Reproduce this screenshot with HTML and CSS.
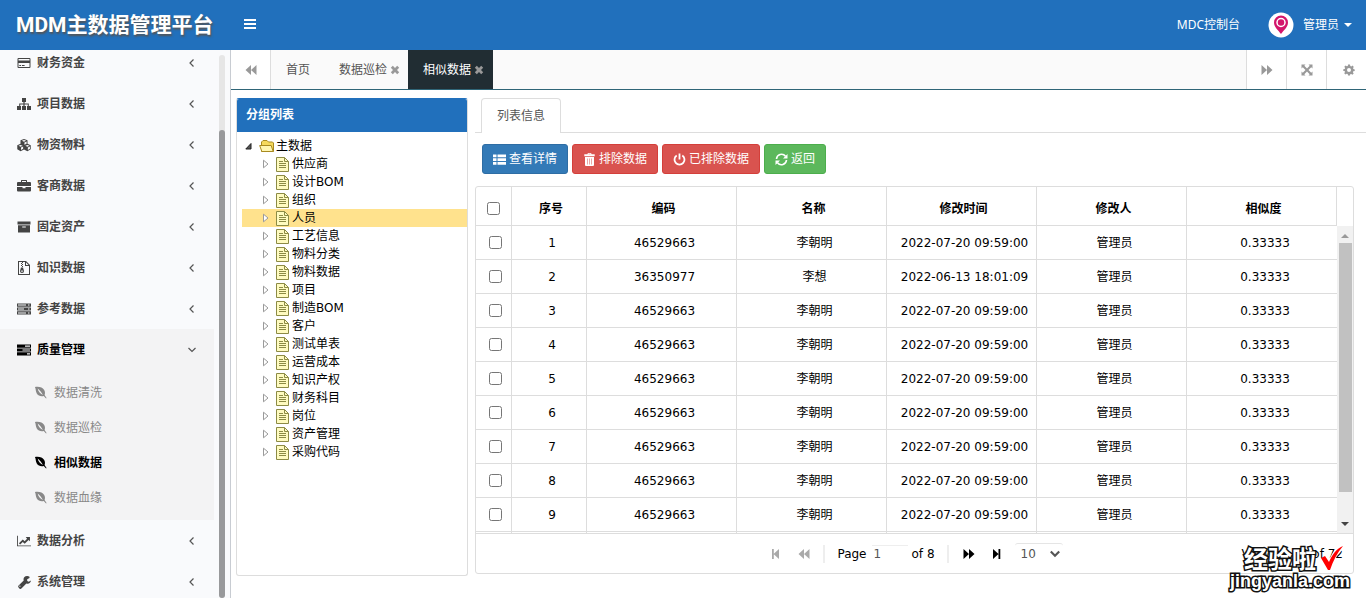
FILE: index.html
```html
<!DOCTYPE html>
<html lang="zh-CN">
<head>
<meta charset="utf-8">
<title>MDM主数据管理平台</title>
<link rel="stylesheet" href="styles.css">
</head>
<body>
<svg class="defs" aria-hidden="true">
  <symbol id="card" viewBox="0 0 14 14"><path fill-rule="evenodd" d="M1.5 2h11q1 0 1 1v8q0 1-1 1h-11q-1 0-1-1V3q0-1 1-1zM1.5 3v1.400h11V3zM1.500 7v4h11V7zM2.300 9h1.800v1H2.300zM5 9h2.600v1H5z"/></symbol>
  <symbol id="sitemap" viewBox="0 0 14 14"><path d="M5 1h4v4H7.600v1.500h4.200V9H14v4h-4V9h.8V7.500H7.600V9H9v4H5V9h1.400V7.500H3.200V9H4v4H0V9h2.200V6.500h4.200V5H5z"/></symbol>
  <symbol id="cubes" viewBox="0 0 16 14"><path fill-rule="evenodd" d="M8 0l4 1.600v4.100l3.700 1.600v4.500L11.900 14 8 12.100 4.100 14 .3 11.800V7.300L4 5.700V1.600zM5.500 2.200L8 3.200l2.500-1L8 1.200zM8.500 4.200v2.400l2.500-1V3.100zM1.700 7.900l2.400 1 2.400-1-2.400-1zM4.600 9.900v2.700l2.400-1.200V8.800zM9.500 7.900l2.400 1 2.400-1-2.400-1zM12.400 9.900v2.700l2.400-1.200V8.800z"/></symbol>
  <symbol id="case" viewBox="0 0 14 14"><path fill-rule="evenodd" d="M4 3V1.600q0-.6.600-.6h4.800q.6 0 .6.600V3h3q1 0 1 1v3H0V4q0-1 1-1zM5 2v1h4V2zM0 8h5.500v1.200h3V8H14v3.500q0 1-1 1H1q-1 0-1-1z"/></symbol>
  <symbol id="archive" viewBox="0 0 14 14"><path fill-rule="evenodd" d="M.5 1.500h13v3H.5zM1 5.300h12v7.200H1zM5.200 6.400v1.200h3.600V6.400z"/></symbol>
  <symbol id="zip" viewBox="0 0 14 14"><path fill-rule="evenodd" d="M1 0h8l4 4v10H1zM2 1v12h10V5H8V1h-2v1H5V1zM9 1.500V4h2.500zM4 2h1v1H4zM5 3h1v1H5zM4 4h1v1H4zM5 5h1v1H5zM4 6.500h2l1 3.500q.2 2-2 2t-2-2zM4.200 9.500v1.300h1.600V9.500z"/></symbol>
  <symbol id="server" viewBox="0 0 14 14"><path fill-rule="evenodd" d="M0 1.500h14v3.200H0zM1 2.500v1h8v-1zM11 2.500v1h1.500v-1zM0 5.400h14v3.200H0zM1 6.500v1h6v-1zM11 6.500v1h1.500v-1zM0 9.300h14v3.200H0zM1 10.400v1h8v-1zM11 10.400v1h1.500v-1z"/></symbol>
  <symbol id="tasks" viewBox="0 0 14 14"><path fill-rule="evenodd" d="M0 1.500h14v3.200H0zM8 2.500v1.200h5V2.500zM0 5.400h14v3.200H0zM5.500 6.400v1.200H13V6.400zM0 9.300h14v3.200H0zM10 10.300v1.200h3v-1.200z"/></symbol>
  <symbol id="leaf" viewBox="0 0 14 14"><path fill-rule="evenodd" d="M1 1c5-.5 8 .3 10 3.200 1.200 2 .9 4.100.4 5.600L13.500 13l-.5.400-2.500-2.700C7.500 11.500 4.500 10.500 3 8 1.600 5.700 2.200 3 1 1zM4 2.700c.4 2.800 2.500 5.600 5.600 7.100C8.200 7.200 6.400 4.800 4 2.700z"/></symbol>
  <symbol id="chart" viewBox="0 0 16 14"><path d="M0 1h1v11h15v1H0zM10 2.500h4.800v4.800l-1.600-1.500-4.400 4.400-2.200-2.200-3 3-1.400-1.400 4.400-4.400 2.200 2.200 2.700-2.900z"/></symbol>
  <symbol id="wrench" viewBox="0 0 14 14"><path fill-rule="evenodd" d="M12.500 2.900l-2.300 1.400v1.600l1.500.8 2.200-1.300c.1 2.300-2.100 4-4.500 3.200l-5 5q-1 .7-2-.2l-.8-.9q-.9-1 0-1.900l5.100-5C6 3 7.500.8 10.200.9q1.300.1 2.300.9zM2.300 11.200a.6.600 0 1 0 1.200 0 .6.600 0 1 0-1.200 0z"/></symbol>
  <symbol id="left" viewBox="0 0 10 10"><path class="line" d="M6.500 1.500L3 5l3.500 3.500"/></symbol>
  <symbol id="down" viewBox="0 0 10 10"><path class="line" d="M1.500 3L5 6.500 8.500 3"/></symbol>
  <symbol id="pick" viewBox="0 0 10 10"><path class="thick" d="M1.500 3L5 6.500 8.500 3"/></symbol>
  <symbol id="rewind" viewBox="0 0 12 12"><path d="M6 1v10L.5 6zM11.500 1v10L6 6z"/></symbol>
  <symbol id="forward" viewBox="0 0 12 12"><path d="M.5 1v10L6 6zM6 1v10l5.500-5z"/></symbol>
  <symbol id="first" viewBox="0 0 12 12"><path d="M2 1h1.800v10H2zM9 1v10L3.500 6z"/></symbol>
  <symbol id="last" viewBox="0 0 12 12"><path d="M2 1v10l5.500-5zM7.500 1h1.800v10H7.500z"/></symbol>
  <symbol id="expand" viewBox="0 0 12 12"><path d="M.5.500h4L3.300 1.800 6 4.500l2.700-2.700L7.500.5h4v4l-1.300-1.200L7.500 6l2.700 2.700 1.300-1.200v4h-4l1.200-1.300L6 7.500l-2.700 2.700 1.200 1.300h-4v-4l1.300 1.200L4.500 6 1.800 3.300.5 4.500z"/></symbol>
  <symbol id="cog" viewBox="0 0 12 12"><path fill-rule="evenodd" d="M5 .5h2l.3 1.500 1 .4 1.300-.8 1.200 1.300-.8 1.200.4 1 1.300.3v1.500l-1.400.4-.4 1 .8 1.200-1.300 1.200-1.200-.8-1 .4L7 11.500H5l-.3-1.400-1-.4-1.200.8-1.300-1.200.8-1.300-.4-1L.3 7V5.200l1.400-.3.4-1-.8-1.200 1.300-1.200 1.200.8 1-.4zM6 4a2 2 0 1 0 0 4 2 2 0 1 0 0-4z"/></symbol>
  <symbol id="close" viewBox="0 0 10 10"><path d="M2.800.8L5 3 7.200.8l2 2L7 5l2.200 2.200-2 2L5 7 2.800 9.200l-2-2L3 5 .8 2.800z"/></symbol>
  <symbol id="list" viewBox="0 0 13 12"><path d="M0 1h3.500v2.800H0zM4.500 1H13v2.800H4.500zM0 4.700h3.500v2.800H0zM4.500 4.700H13v2.800H4.500zM0 8.400h3.500v2.800H0zM4.500 8.400H13v2.800H4.500z"/></symbol>
  <symbol id="trash" viewBox="0 0 12 13"><path fill-rule="evenodd" d="M4 1.200Q4 0 5 0h2q1 0 1 1.200h3.200v2H.8v-2zM5 .7v.5h2V.7zM1.500 4h9v8q0 1-1 1h-7q-1 0-1-1zM3.600 5.500v6h.5v-6zM5.700 5.500v6h.5v-6zM7.900 5.500v6h.5v-6z"/></symbol>
  <symbol id="power" viewBox="0 0 13 13"><path class="thick" d="M3.700 2.500a5 5 0 1 0 5.600 0M6.500.5v6"/></symbol>
  <symbol id="refresh" viewBox="0 0 13 13"><path class="mid" d="M1.500 6A5 5 0 0 1 10.500 3.300M11.500 7A5 5 0 0 1 2.500 9.700"/><path d="M12.500 1v4.500H8zM.5 12V7.500H5z"/></symbol>
  <symbol id="closed" viewBox="0 0 10 10"><path fill="#fff" stroke="#9a9a9a" d="M2.500 1.200v7.600L7 5z"/></symbol>
  <symbol id="open" viewBox="0 0 10 10"><path fill="#555" stroke="#222" d="M7 2.500V8H1.800z"/></symbol>
  <symbol id="folder" viewBox="0 0 16 16"><path fill="#f5d95c" stroke="#a88a20" d="M2.500 13.500V4l1.500-1.500h4L9.500 4h4l1 1v8.500z"/><path fill="#fff6b0" stroke="#a88a20" d="M.7 7.500h11.500l2 6H2.800z"/></symbol>
  <symbol id="doc" viewBox="0 0 13 15"><path fill="#fffbc0" stroke="#8c8b45" d="M.5 .5h8l4 4v10h-12z"/><path fill="none" stroke="#8c8b45" d="M8.500 .5v4h4M3 4.500h4M3 6.500h7M3 8.500h7M3 10.500h7"/></symbol>
</svg>

<header class="top">
  <h1 class="brand">MDM主数据管理平台</h1>
  <button class="burger" aria-label="菜单"><i></i><i></i><i></i></button>
  <a class="console" href="#">MDC控制台</a>
  <button class="user">
    <svg class="avatar" viewBox="0 0 26 26"><circle cx="13" cy="13" r="12.500" fill="#fff"/><path fill="#d3156b" d="M13 22c-2.500-3.500-7-7-7-11.500a7 7 0 0 1 14 0C20 15 15.500 18.500 13 22z"/><circle cx="13" cy="10.500" r="4" fill="#d3156b" stroke="#fff" stroke-width="1.500"/></svg>
    管理员<span class="caret"></span>
  </button>
</header>

<div class="shell">
  <aside class="side">
    <nav class="menu">
      <a class="item" href="#"><svg><use href="#card"/></svg><span>财务资金</span><svg class="arrow"><use href="#left"/></svg></a>
      <a class="item" href="#"><svg><use href="#sitemap"/></svg><span>项目数据</span><svg class="arrow"><use href="#left"/></svg></a>
      <a class="item" href="#"><svg><use href="#cubes"/></svg><span>物资物料</span><svg class="arrow"><use href="#left"/></svg></a>
      <a class="item" href="#"><svg><use href="#case"/></svg><span>客商数据</span><svg class="arrow"><use href="#left"/></svg></a>
      <a class="item" href="#"><svg><use href="#archive"/></svg><span>固定资产</span><svg class="arrow"><use href="#left"/></svg></a>
      <a class="item" href="#"><svg><use href="#zip"/></svg><span>知识数据</span><svg class="arrow"><use href="#left"/></svg></a>
      <a class="item" href="#"><svg><use href="#server"/></svg><span>参考数据</span><svg class="arrow"><use href="#left"/></svg></a>
      <div class="group">
        <a class="item on" href="#"><svg><use href="#tasks"/></svg><span>质量管理</span><svg class="arrow"><use href="#down"/></svg></a>
        <div class="subs">
          <a class="sub" href="#"><svg><use href="#leaf"/></svg>数据清洗</a>
          <a class="sub" href="#"><svg><use href="#leaf"/></svg>数据巡检</a>
          <a class="sub on" href="#"><svg><use href="#leaf"/></svg>相似数据</a>
          <a class="sub" href="#"><svg><use href="#leaf"/></svg>数据血缘</a>
        </div>
      </div>
      <a class="item" href="#"><svg><use href="#chart"/></svg><span>数据分析</span><svg class="arrow"><use href="#left"/></svg></a>
      <a class="item" href="#"><svg><use href="#wrench"/></svg><span>系统管理</span><svg class="arrow"><use href="#left"/></svg></a>
    </nav>
    <div class="rail"><div class="thumb"></div></div>
  </aside>

  <main class="main">
    <div class="tabs">
      <button class="tool first" aria-label="向左"><svg><use href="#rewind"/></svg></button>
      <a class="tab" href="#">首页</a>
      <a class="tab" href="#">数据巡检<svg><use href="#close"/></svg></a>
      <a class="tab current" href="#">相似数据<svg><use href="#close"/></svg></a>
      <span class="fill"></span>
      <button class="tool" aria-label="向右"><svg><use href="#forward"/></svg></button>
      <button class="tool" aria-label="全屏"><svg><use href="#expand"/></svg></button>
      <button class="tool cog" aria-label="设置"><svg><use href="#cog"/></svg></button>
    </div>

    <div class="content">
      <section class="tree">
        <h2 class="tree-title">分组列表</h2>
        <ul class="nodes">
          <li class="node root"><svg class="tw"><use href="#open"/></svg><svg class="fold"><use href="#folder"/></svg>主数据</li>
          <li class="node"><svg class="tw"><use href="#closed"/></svg><svg class="doc"><use href="#doc"/></svg>供应商</li>
          <li class="node"><svg class="tw"><use href="#closed"/></svg><svg class="doc"><use href="#doc"/></svg>设计BOM</li>
          <li class="node"><svg class="tw"><use href="#closed"/></svg><svg class="doc"><use href="#doc"/></svg>组织</li>
          <li class="node picked"><svg class="tw"><use href="#closed"/></svg><svg class="doc"><use href="#doc"/></svg>人员</li>
          <li class="node"><svg class="tw"><use href="#closed"/></svg><svg class="doc"><use href="#doc"/></svg>工艺信息</li>
          <li class="node"><svg class="tw"><use href="#closed"/></svg><svg class="doc"><use href="#doc"/></svg>物料分类</li>
          <li class="node"><svg class="tw"><use href="#closed"/></svg><svg class="doc"><use href="#doc"/></svg>物料数据</li>
          <li class="node"><svg class="tw"><use href="#closed"/></svg><svg class="doc"><use href="#doc"/></svg>项目</li>
          <li class="node"><svg class="tw"><use href="#closed"/></svg><svg class="doc"><use href="#doc"/></svg>制造BOM</li>
          <li class="node"><svg class="tw"><use href="#closed"/></svg><svg class="doc"><use href="#doc"/></svg>客户</li>
          <li class="node"><svg class="tw"><use href="#closed"/></svg><svg class="doc"><use href="#doc"/></svg>测试单表</li>
          <li class="node"><svg class="tw"><use href="#closed"/></svg><svg class="doc"><use href="#doc"/></svg>运营成本</li>
          <li class="node"><svg class="tw"><use href="#closed"/></svg><svg class="doc"><use href="#doc"/></svg>知识产权</li>
          <li class="node"><svg class="tw"><use href="#closed"/></svg><svg class="doc"><use href="#doc"/></svg>财务科目</li>
          <li class="node"><svg class="tw"><use href="#closed"/></svg><svg class="doc"><use href="#doc"/></svg>岗位</li>
          <li class="node"><svg class="tw"><use href="#closed"/></svg><svg class="doc"><use href="#doc"/></svg>资产管理</li>
          <li class="node"><svg class="tw"><use href="#closed"/></svg><svg class="doc"><use href="#doc"/></svg>采购代码</li>
        </ul>
      </section>

      <section class="work">
        <div class="pills"><a class="pill" href="#">列表信息</a></div>
        <div class="actions">
          <button class="btn blue"><svg><use href="#list"/></svg>查看详情</button>
          <button class="btn red"><svg><use href="#trash"/></svg>排除数据</button>
          <button class="btn red"><svg><use href="#power"/></svg>已排除数据</button>
          <button class="btn green"><svg><use href="#refresh"/></svg>返回</button>
        </div>
        <div class="grid">
          <div class="head">
            <table class="data">
              <colgroup><col class="c-check"><col class="c-num"><col><col><col><col><col></colgroup>
              <thead><tr><th><input type="checkbox" aria-label="全选"></th><th>序号</th><th>编码</th><th>名称</th><th>修改时间</th><th>修改人</th><th>相似度</th></tr></thead>
            </table>
          </div>
          <div class="rows">
            <table class="data">
              <colgroup><col class="c-check"><col class="c-num"><col><col><col><col><col></colgroup>
              <tbody>
                <tr><td><input type="checkbox" aria-label="选择1"></td><td>1</td><td>46529663</td><td>李朝明</td><td>2022-07-20 09:59:00</td><td>管理员</td><td>0.33333</td></tr>
                <tr><td><input type="checkbox" aria-label="选择2"></td><td>2</td><td>36350977</td><td>李想</td><td>2022-06-13 18:01:09</td><td>管理员</td><td>0.33333</td></tr>
                <tr><td><input type="checkbox" aria-label="选择3"></td><td>3</td><td>46529663</td><td>李朝明</td><td>2022-07-20 09:59:00</td><td>管理员</td><td>0.33333</td></tr>
                <tr><td><input type="checkbox" aria-label="选择4"></td><td>4</td><td>46529663</td><td>李朝明</td><td>2022-07-20 09:59:00</td><td>管理员</td><td>0.33333</td></tr>
                <tr><td><input type="checkbox" aria-label="选择5"></td><td>5</td><td>46529663</td><td>李朝明</td><td>2022-07-20 09:59:00</td><td>管理员</td><td>0.33333</td></tr>
                <tr><td><input type="checkbox" aria-label="选择6"></td><td>6</td><td>46529663</td><td>李朝明</td><td>2022-07-20 09:59:00</td><td>管理员</td><td>0.33333</td></tr>
                <tr><td><input type="checkbox" aria-label="选择7"></td><td>7</td><td>46529663</td><td>李朝明</td><td>2022-07-20 09:59:00</td><td>管理员</td><td>0.33333</td></tr>
                <tr><td><input type="checkbox" aria-label="选择8"></td><td>8</td><td>46529663</td><td>李朝明</td><td>2022-07-20 09:59:00</td><td>管理员</td><td>0.33333</td></tr>
                <tr><td><input type="checkbox" aria-label="选择9"></td><td>9</td><td>46529663</td><td>李朝明</td><td>2022-07-20 09:59:00</td><td>管理员</td><td>0.33333</td></tr>
                <tr><td></td><td></td><td></td><td></td><td></td><td></td><td></td></tr>
              </tbody>
            </table>
            <div class="scroll"><span class="up"></span><span class="bar"></span><span class="dn"></span></div>
          </div>
          <div class="pager">
            <span></span>
            <div class="pages">
              <button class="pg dim" aria-label="首页"><svg><use href="#first"/></svg></button>
              <button class="pg dim" aria-label="上一页"><svg><use href="#rewind"/></svg></button>
              <i class="sep"></i>
              <label class="page">Page<input class="page-no" type="text" value="1"></label>
              <span>of 8</span>
              <i class="sep wide"></i>
              <button class="pg" aria-label="下一页"><svg><use href="#forward"/></svg></button>
              <button class="pg" aria-label="末页"><svg><use href="#last"/></svg></button>
              <div class="size"><select aria-label="每页条数"><option>10</option></select><svg><use href="#pick"/></svg></div>
            </div>
            <span class="view">View 1 - 10 of 72</span>
          </div>
        </div>
      </section>
    </div>
  </main>
</div>

<div class="mark">
  <div class="mark-cn">经验啦<svg viewBox="0 0 24 26"><path fill="none" stroke="#fff" stroke-width="5" d="M3 14l6 8C12 13 16 6 21 3"/><path fill="#f00" d="M1 13l4-2 4 6C12 10 16 4 23 1 17 8 13 16 10 25H8z"/></svg></div>
  <div class="mark-en">jingyanla.com</div>
</div>
</body>
</html>
```

FILE: styles.css
```css
* { box-sizing: border-box; }
body {
  margin: 0; height: 100vh; overflow: hidden; display: flex; flex-direction: column;
  font: 12px/18px "DejaVu Sans", "Noto Sans CJK SC", sans-serif; color: #222; background: #fff;
}
button { border: 0; background: none; padding: 0; font: inherit; color: inherit; }
a { color: inherit; text-decoration: none; }
svg { fill: currentColor; flex: none; }
.defs { position: absolute; width: 0; height: 0; }
.line { fill: none; stroke: currentColor; stroke-width: 1.2; }
.thick { fill: none; stroke: currentColor; stroke-width: 1.8; }
.mid { fill: none; stroke: currentColor; stroke-width: 1.6; }

.top { height: 50px; flex: none; display: flex; align-items: center; background: #2170bc; color: #fff; padding: 0 14px 0 16px; font-family: "Noto Sans", "Noto Sans CJK SC", sans-serif; }
.brand { margin: 0; width: 228px; font: bold 21px/50px Roboto, "Noto Sans CJK SC", sans-serif; text-shadow: 1px 2px 2px #555; white-space: nowrap; }
.burger { display: grid; gap: 2px; width: 12px; padding-bottom: 2px; }
.burger i { height: 2px; background: #fff; }
.console { margin-left: auto; }
.user { display: flex; align-items: center; margin-left: 28px; }
.avatar { width: 26px; height: 26px; margin-right: 9px; }
.caret { border: 4px solid transparent; border-top-color: #fff; border-bottom: 0; margin-left: 5px; }

.shell { flex: 1; min-height: 0; display: flex; }
.side { width: 231px; flex: none; display: flex; background: #f9fafc; border-right: 1px solid #c8ccd2; overflow: hidden; }
.menu { width: 214px; margin-top: -8px; }
.item { height: 41px; display: flex; align-items: center; padding: 0 16px 0 17px; color: #444; font-weight: 700; }
.item svg { width: 14px; height: 14px; margin-right: 6px; }
.item svg.arrow { width: 10px; height: 10px; margin: 0 1px 0 auto; color: #555; }
.item.on, .sub.on { color: #000; font-weight: 700; }
.group { background: #f3f3f4; }
.subs { padding: 5px 0; }
.sub { height: 35px; display: flex; align-items: center; padding-left: 34px; color: #888; }
.sub svg { width: 13px; height: 13px; margin-right: 7px; }
.rail { width: 6px; margin: 5px 0 0 5px; background: #e6e6e6; border-radius: 3px; padding-top: 75px; display: flex; }
.thumb { flex: 1; background: #98999b; border-radius: 3px; }

.main { flex: 1; min-width: 0; display: flex; flex-direction: column; }
.tabs { height: 40px; flex: none; display: flex; background: #fafafa; border-bottom: 1px solid #2f6577; color: #555; }
.tool { width: 40px; display: grid; place-items: center; background: #fff; border-left: 1px solid #ddd; color: #999; }
.tool.first { border-left: 0; border-right: 1px solid #ddd; }
.tool.cog { padding-left: 4px; }
.tool svg { width: 12px; height: 12px; }
.tab { display: flex; align-items: center; padding: 0 15px; }
.tab + .tab { padding: 0 8px 0 14px; }
.tab svg { width: 10px; height: 10px; margin-left: 3px; color: #999; }
.tab.current { background: #212d33; color: #fff; padding-left: 15px; padding-right: 9px; }
.fill { flex: 1; }

.content { flex: 1; min-height: 0; display: flex; gap: 7px; padding-left: 5px; }
.tree { width: 232px; flex: none; margin: 8px 0 22px; border: 1px solid #ddd; border-top-color: #2170bc; border-radius: 3px; overflow: hidden; }
.tree-title { margin: -1px 0 0; padding: 0 9px; font-size: 12px; line-height: 34px; background: #2170bc; color: #fff; }
.nodes { list-style: none; margin: 0; padding: 5px 0 0 5px; color: #000; }
.node { display: flex; align-items: center; height: 18px; padding-left: 19px; }
.node.root { padding-left: 2px; }
.tw { width: 10px; height: 10px; margin-right: 5px; }
.node .doc { width: 13px; height: 15px; margin-right: 3px; }
.node .fold { width: 16px; height: 16px; margin-right: 1px; }
.picked { background: #ffe28d; }

.work { flex: 1; min-width: 0; display: flex; flex-direction: column; padding-top: 8px; }
.pills { height: 35px; flex: none; display: flex; padding-left: 6px; border-bottom: 1px solid #ddd; }
.pill { height: 35px; width: 80px; text-align: center; line-height: 34px; color: #555; background: #fff; border: 1px solid #ddd; border-bottom: 0; border-radius: 4px 4px 0 0; }
.actions { display: flex; gap: 4px; padding: 11px 7px 12px; }
.btn { height: 30px; display: flex; align-items: center; padding: 0 10px; border: 1px solid; border-radius: 3px; color: #fff; white-space: nowrap; }
.btn svg { width: 13px; height: 13px; margin-right: 3px; }
.blue { background: #337ab7; border-color: #2e6da4; }
.red { background: #d9534f; border-color: #d43f3a; }
.green { background: #5cb85c; border-color: #4cae4c; }

.grid { flex: 1; min-height: 0; margin: 0 12px 24px 0; border: 1px solid #ddd; border-radius: 3px; display: flex; flex-direction: column; color: #000; }
.head { padding-right: 16px; }
.data { width: 100%; table-layout: fixed; border-collapse: separate; border-spacing: 0; text-align: center; }
.c-check { width: 36px; }
.c-num { width: 75px; }
.data th, .data td { padding: 0; height: 34px; border: 0 solid #ddd; border-width: 0 1px 1px 0; white-space: nowrap; }
.data th { height: 39px; padding-top: 5px; }
.data th:nth-child(n+2) { padding-left: 4px; }
.data tbody td:nth-child(n+2) { padding-left: 6px; }
.data tbody td:last-child { border-right: 0; }
.data input { width: 13px; height: 13px; margin: 0 auto; display: block; }
.data td input { margin-left: 13px; }
.rows { flex: 1; min-height: 0; display: flex; align-items: flex-start; overflow: hidden; border-bottom: 1px solid #ddd; }
.rows .data { flex: 1; }
.scroll { width: 16px; flex: none; align-self: stretch; display: flex; flex-direction: column; align-items: center; background: #f1f1f1; }
.up, .dn { border: 4px solid transparent; }
.up { border-bottom-color: #999; border-top: 0; margin: 8px 0 5px; }
.dn { border-top-color: #444; border-bottom: 0; margin: auto 0 7px; }
.bar { width: 13px; height: 81%; background: #c1c1c1; }
.pager { height: 39px; flex: none; display: grid; grid-template-columns: 1fr auto 1fr; align-items: center; padding-right: 10px; }
.pages { display: flex; align-items: center; padding-left: 6px; }
.pg { width: 28px; height: 18px; display: grid; place-items: center; }
.pg svg { width: 12px; height: 12px; }
.dim { color: #aaa; }
.sep { width: 2px; height: 18px; margin: 0 12px 0 5px; background: #eee; }
.sep.wide { margin: 0 6px 0 12px; }
.page { display: flex; align-items: center; }
.page-no { width: 36px; height: 18px; padding: 0 2px; margin: 0 4px 0 5px; border: 0; border-top: 1px solid #eee; font: inherit; color: #555; }
.size { display: flex; align-items: center; width: 48px; height: 22px; margin-left: 4px; border-top: 1px solid #e5e5e5; border-radius: 3px; color: #555; }
.size select { appearance: none; border: 0; background: none; padding: 0 6px; flex: 1; width: 30px; font: inherit; color: inherit; }
.size svg { width: 12px; height: 12px; margin-right: 2px; }
.view { text-align: right; }

.mark { position: absolute; right: 16px; bottom: 7px; color: #fff; -webkit-text-stroke: 3px #111; paint-order: stroke fill; }
.mark-cn { display: flex; justify-content: flex-end; font: bold 24px/26px "Noto Sans CJK SC", sans-serif; padding-right: 6px; }
.mark-cn svg { width: 24px; height: 26px; margin-left: 4px; }
.mark-en { font: bold 18px/20px "DejaVu Sans", "Liberation Sans", sans-serif; font-family: "Liberation Sans", sans-serif; text-align: right; }
```
